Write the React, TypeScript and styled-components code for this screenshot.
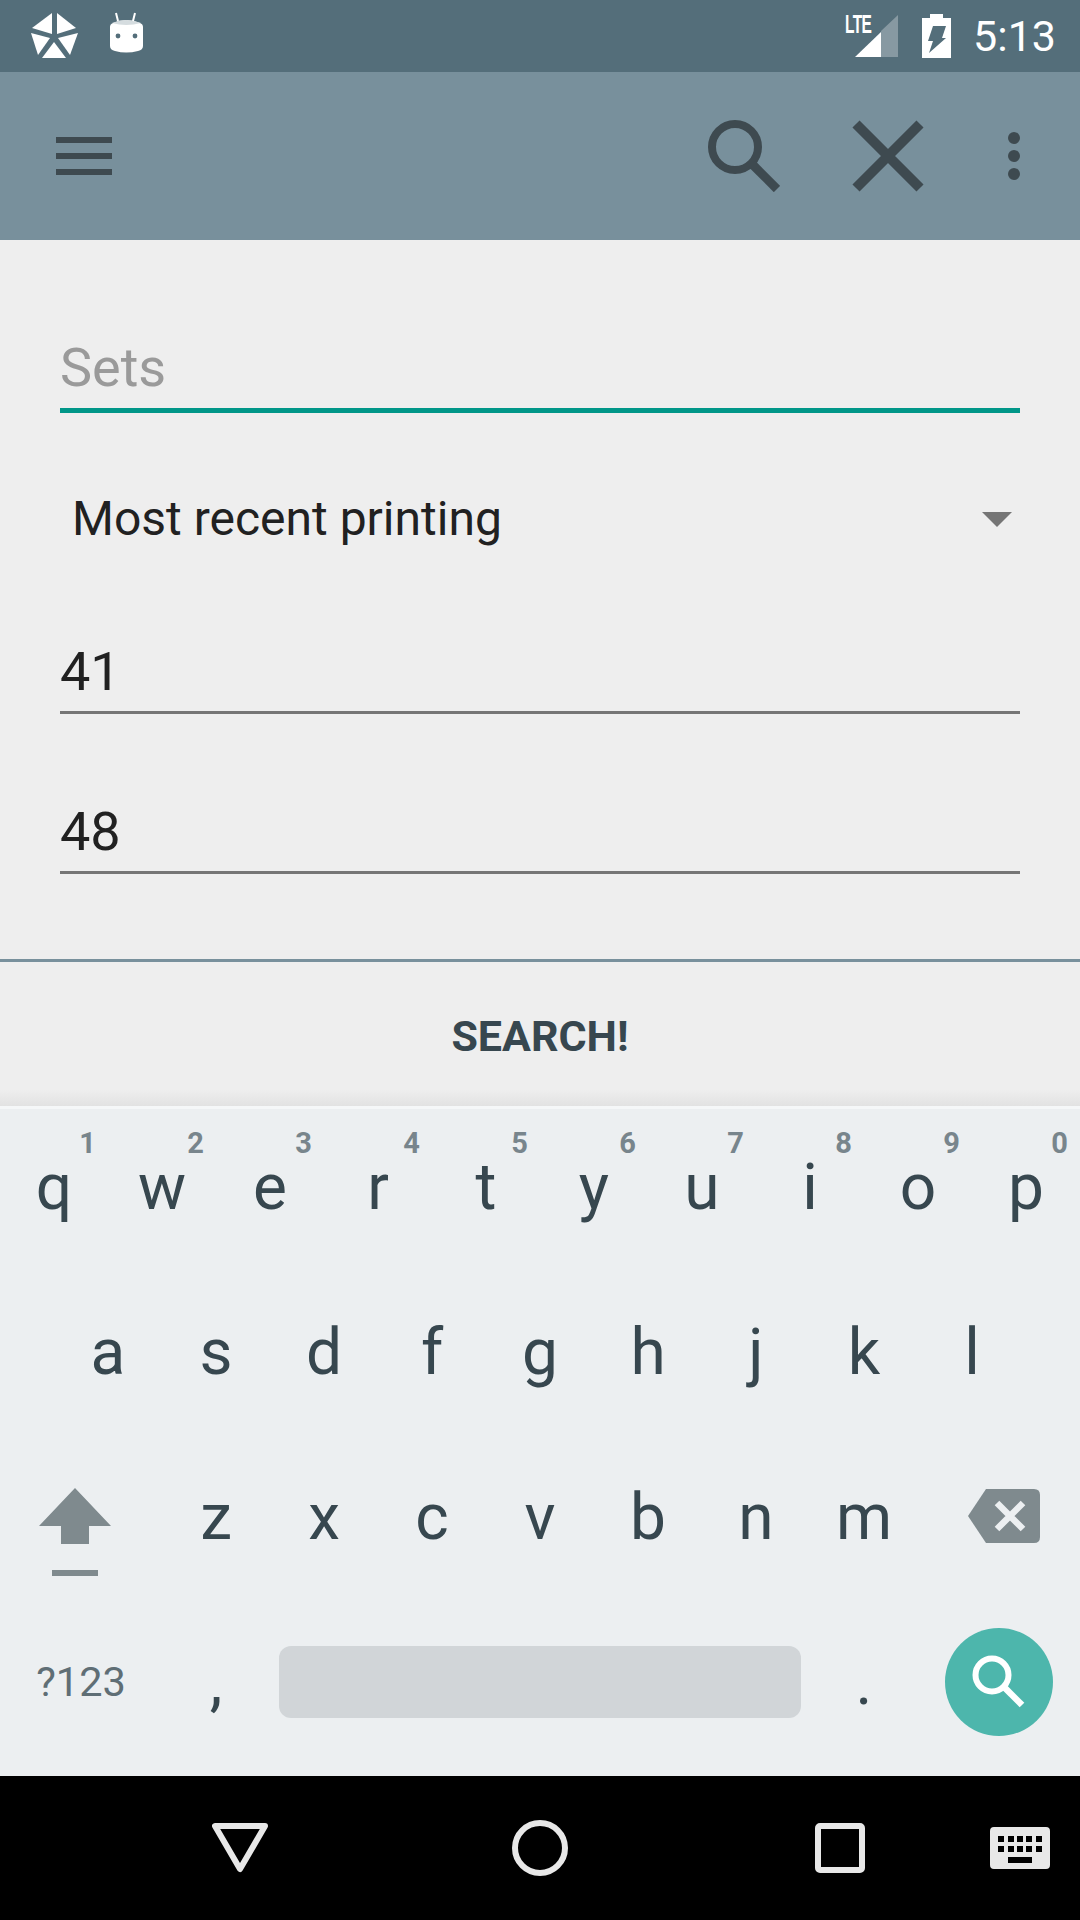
import React from "react";
import styled, { createGlobalStyle } from "styled-components";

const Global = createGlobalStyle`
  html, body { margin: 0; padding: 0; background: #eeeeee; }
  body { font-family: Roboto, "Noto Sans", sans-serif; }
`;

const Screen = styled.div`
  width: 1080px;
  height: 1920px;
  display: flex;
  flex-direction: column;
  overflow: hidden;
`;

const StatusBar = styled.div`
  height: 72px;
  background: #546e7a;
  display: flex;
  align-items: center;
  color: #fff;
`;
const StatusLeft = styled.div`
  flex: 1;
  display: flex;
  height: 72px;
`;
const StatusRight = styled.div`
  display: flex;
  align-items: center;
  height: 72px;
  padding-right: 24px;
`;
const LteGroup = styled.div`
  position: relative;
  width: 54px;
  height: 72px;
  margin-right: 23px;
`;
const LteText = styled.span`
  position: absolute;
  left: 0;
  top: 12px;
  font: 700 25px/24px "Liberation Sans", sans-serif;
  letter-spacing: -1px;
  transform: scaleX(0.62);
  transform-origin: left center;
  color: #fff;
`;
const Time = styled.span`
  font: 400 43px/72px Roboto, sans-serif;
  margin-left: 22px;
  color: #fff;
`;

const Toolbar = styled.div`
  height: 168px;
  background: #78909c;
  display: flex;
  align-items: center;
  padding-left: 56px;
`;
const ToolbarSpacer = styled.div`
  flex: 1;
`;
const Icon = styled.svg`
  display: block;
  flex: none;
`;
const SpacedIcon = styled(Icon)<{ $ml: number; $mr?: number }>`
  margin-left: ${(p) => p.$ml}px;
  margin-right: ${(p) => p.$mr ?? 0}px;
`;

const Body = styled.div`
  flex: 1;
  background: #eeeeee;
  display: flex;
  flex-direction: column;
  padding-top: 93px;
`;
const Field = styled.div<{ $focus?: boolean; $gap?: number }>`
  margin: ${(p) => p.$gap ?? 0}px 60px 0;
  height: 80px;
  box-sizing: border-box;
  font: 400 54px / ${(p) => (p.$focus ? 70 : 75)}px Roboto, sans-serif;
  color: ${(p) => (p.$focus ? "#9a9a9a" : "#212121")};
  border-bottom: ${(p) => (p.$focus ? "5px solid #009688" : "3px solid #757575")};
`;
const Spinner = styled.div`
  margin: 52px 60px 0;
  height: 108px;
  display: flex;
  align-items: center;
  justify-content: space-between;
  padding: 0 8px 0 12px;
  font: 400 48px/60px Roboto, sans-serif;
  color: #212121;
`;
const Caret = styled.div`
  width: 0;
  height: 0;
  border-left: 15px solid transparent;
  border-right: 15px solid transparent;
  border-top: 15px solid #757575;
`;
const Divider = styled.div`
  margin-top: 85px;
  height: 3px;
  background: #78909c;
`;
const SearchButton = styled.div`
  flex: 1;
  display: flex;
  align-items: center;
  justify-content: center;
  box-sizing: border-box;
  padding-top: 3px;
  font: 700 43px/48px Roboto, sans-serif;
  color: #37474f;
  background: linear-gradient(to bottom, #eeeeee calc(100% - 16px), #e2e2e2);
`;

const Keyboard = styled.div`
  height: 670px;
  box-sizing: border-box;
  background: #eceff1;
  border-top: 3px solid #f5f7f8;
  display: flex;
  flex-direction: column;
`;
const KeyRow = styled.div`
  height: 165px;
  display: flex;
  justify-content: center;
  &:last-child { height: 156px; }
`;
const Key = styled.div`
  position: relative;
  width: 108px;
  flex: none;
  display: flex;
  justify-content: center;
  font: 400 64px/157px Roboto, sans-serif;
  color: #37474f;
`;
const Hint = styled.span`
  position: absolute;
  top: 16px;
  right: 12px;
  font: 700 29px/36px Roboto, sans-serif;
  color: #78858c;
`;
const SideKey = styled.div`
  width: 162px;
  flex: none;
  display: flex;
  align-items: center;
  justify-content: center;
`;
const ShiftIcon = styled(Icon)`
  margin: 23px 12px 0 0;
`;
const DeleteIcon = styled(Icon)`
  margin: 0 0 11px 10px;
`;
const SymKey = styled(SideKey)`
  font: 400 41.5px/48px Roboto, sans-serif;
  color: #5f6e75;
`;
const SpaceBar = styled.div`
  width: 522px;
  height: 72px;
  margin: 0 9px;
  align-self: center;
  background: #d1d5d8;
  border-radius: 12px;
  flex: none;
`;
const EnterCircle = styled.div`
  width: 108px;
  height: 108px;
  border-radius: 50%;
  background: #4db6ac;
  display: flex;
  align-items: center;
  justify-content: center;
`;

const NavBar = styled.div`
  height: 144px;
  background: #000;
  display: flex;
  align-items: center;
`;
const NavSlot = styled.div<{ $w?: number; $ml?: number }>`
  width: ${(p) => p.$w ?? 120}px;
  margin-left: ${(p) => p.$ml ?? 0}px;
  flex: none;
  display: flex;
  justify-content: center;
`;

const Row1 = "qwertyuiop".split("");
const Row2 = "asdfghjkl".split("");
const Row3 = "zxcvbnm".split("");
const Digits = "1234567890".split("");

export default function App() {
  return (
    <Screen>
      <Global />
      <StatusBar>
        <StatusLeft>
          <Icon width="160" height="72" viewBox="0 0 160 72">
            <g fill="#fff">
              <path d="M52 13V34L32 28Z" />
              <path d="M57 13V34L76 28Z" />
              <path d="M31 33L50 38L38 55Z" />
              <path d="M78 33L58 38L70 55Z" />
              <path d="M54 42L66 58H42Z" />
              <path d="M110 27Q110 24 113 23Q126 17 140 23Q143 24 143 27V46Q143 50 138 51Q126 54 115 51Q110 50 110 46Z" />
            </g>
            <path d="M112 23Q126 17 141 23Q126 27 112 23Z" fill="#d5dcdf" />
            <path d="M118 21L116 13M133 21L135 13" stroke="#fff" strokeWidth="2" />
            <circle cx="118" cy="36" r="2.4" fill="#546e7a" />
            <circle cx="135" cy="36" r="2.4" fill="#546e7a" />
          </Icon>
        </StatusLeft>
        <StatusRight>
          <LteGroup>
            <LteText>LTE</LteText>
            <Icon width="54" height="72" viewBox="0 0 54 72">
              <path d="M36 31L53 15V57H36Z" fill="#fff" fillOpacity="0.3" />
              <path d="M10 57L36 32V57Z" fill="#fff" />
            </Icon>
          </LteGroup>
          <Icon width="29" height="44" viewBox="0 0 29 44">
            <path
              fillRule="evenodd"
              fill="#fff"
              d="M8 0H21V4H29V44H0V4H8ZM11 12H24L20 24H24L7 39L11 27H6Z"
            />
          </Icon>
          <Time>5:13</Time>
        </StatusRight>
      </StatusBar>

      <Toolbar>
        <Icon width="56" height="38" viewBox="0 0 56 38">
          <path d="M0 0H56V6H0ZM0 16H56V22H0ZM0 32H56V38H0Z" fill="#3e4a50" />
        </Icon>
        <ToolbarSpacer />
        <Icon width="72" height="72" viewBox="0 0 72 72">
          <circle cx="27" cy="27" r="23" fill="none" stroke="#3e4a50" strokeWidth="8" />
          <path d="M44 44L69 69" stroke="#3e4a50" strokeWidth="9" />
        </Icon>
        <SpacedIcon $ml={72} width="72" height="72" viewBox="0 0 72 72">
          <path d="M4 4L68 68M68 4L4 68" stroke="#3e4a50" strokeWidth="10" />
        </SpacedIcon>
        <SpacedIcon $ml={84} $mr={60} width="12" height="48" viewBox="0 0 12 48">
          <circle cx="6" cy="6" r="6" fill="#3e4a50" />
          <circle cx="6" cy="24" r="6" fill="#3e4a50" />
          <circle cx="6" cy="42" r="6" fill="#3e4a50" />
        </SpacedIcon>
      </Toolbar>

      <Body>
        <Field $focus>Sets</Field>
        <Spinner>
          Most recent printing
          <Caret />
        </Spinner>
        <Field $gap={61}>41</Field>
        <Field $gap={80}>48</Field>
        <Divider />
        <SearchButton>SEARCH!</SearchButton>
      </Body>

      <Keyboard>
        <KeyRow>
          {Row1.map((k, i) => (
            <Key key={k}>
              {k}
              <Hint>{Digits[i]}</Hint>
            </Key>
          ))}
        </KeyRow>
        <KeyRow>
          {Row2.map((k) => (
            <Key key={k}>{k}</Key>
          ))}
        </KeyRow>
        <KeyRow>
          <SideKey>
            <ShiftIcon width="72" height="90" viewBox="0 0 72 90">
              <path d="M36 0L72 38H50V56H22V38H0Z" fill="#7f8a8e" />
              <path d="M13 82H59V88H13Z" fill="#7f8a8e" />
            </ShiftIcon>
          </SideKey>
          {Row3.map((k) => (
            <Key key={k}>{k}</Key>
          ))}
          <SideKey>
            <DeleteIcon width="72" height="54" viewBox="0 0 72 54">
              <path fill="#7f8a8e" d="M18 0H66Q72 0 72 6V48Q72 54 66 54H18L0 27Z" />
              <path d="M29 14L55 40M55 14L29 40" stroke="#eceff1" strokeWidth="6.5" />
            </DeleteIcon>
          </SideKey>
        </KeyRow>
        <KeyRow>
          <SymKey>?123</SymKey>
          <Key>,</Key>
          <SpaceBar />
          <Key>.</Key>
          <SideKey>
            <EnterCircle>
              <Icon width="54" height="54" viewBox="0 0 54 54">
                <circle cx="20" cy="20" r="16.5" fill="none" stroke="#fff" strokeWidth="6" />
                <path d="M33 33L50 50" stroke="#fff" strokeWidth="6.5" />
              </Icon>
            </EnterCircle>
          </SideKey>
        </KeyRow>
      </Keyboard>

      <NavBar>
        <NavSlot $w={480}>
          <Icon width="56" height="50" viewBox="0 0 56 50">
            <path d="M3 3H53L28 46Z" fill="none" stroke="#e8e8e8" strokeWidth="6" strokeLinejoin="round" />
          </Icon>
        </NavSlot>
        <NavSlot>
          <Icon width="56" height="56" viewBox="0 0 56 56">
            <circle cx="28" cy="28" r="25" fill="none" stroke="#e8e8e8" strokeWidth="6" />
          </Icon>
        </NavSlot>
        <NavSlot $ml={180}>
          <Icon width="50" height="50" viewBox="0 0 50 50">
            <rect x="3" y="3" width="44" height="44" rx="2" fill="none" stroke="#e8e8e8" strokeWidth="6" />
          </Icon>
        </NavSlot>
        <NavSlot $ml={60}>
          <Icon width="60" height="42" viewBox="0 0 60 42">
            <path
              fillRule="evenodd"
              fill="#e8e8e8"
              d="M4 0H56Q60 0 60 4V38Q60 42 56 42H4Q0 42 0 38V4Q0 0 4 0ZM8 9V15H14V9ZM18 9V15H24V9ZM27 9V15H33V9ZM36 9V15H42V9ZM46 9V15H52V9ZM8 19V25H14V19ZM18 19V25H24V19ZM27 19V25H33V19ZM36 19V25H42V19ZM46 19V25H52V19ZM18 30V36H42V30Z"
            />
          </Icon>
        </NavSlot>
      </NavBar>
    </Screen>
  );
}
